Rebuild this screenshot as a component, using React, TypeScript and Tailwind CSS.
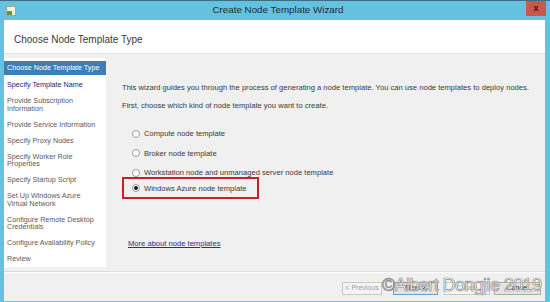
import React from "react";

const steps: { label: string; lines?: string[]; active?: boolean; next?: boolean }[] = [
  { label: "Choose Node Template Type", active: true },
  { label: "Specify Template Name", next: true },
  { label: "Provide Subscription Information", lines: ["Provide Subscription", "Information"] },
  { label: "Provide Service Information" },
  { label: "Specify Proxy Nodes" },
  { label: "Specify Worker Role Properties", lines: ["Specify Worker Role", "Properties"] },
  { label: "Specify Startup Script" },
  { label: "Set Up Windows Azure Virtual Network", lines: ["Set Up Windows Azure", "Virtual Network"] },
  { label: "Configure Remote Desktop Credentials", lines: ["Configure Remote Desktop", "Credentials"] },
  { label: "Configure Availability Policy" },
  { label: "Review" },
];

function Radio({ checked }: { checked?: boolean }) {
  return (
    <span className="w-[8px] h-[8px] rounded-full border border-[#9a9a9a] bg-white flex items-center justify-center shrink-0">
      {checked && <span className="w-[4px] h-[4px] rounded-full bg-[#1a1a1a]" />}
    </span>
  );
}

export default function App() {
  return (
    <div className="w-[550px] h-[302px] bg-[#62c2df] flex flex-col overflow-hidden relative font-['Liberation_Sans',sans-serif]">
      {/* title bar */}
      <div className="h-[20px] border-t border-[#3d6f80] flex items-center relative shrink-0">
        <div className="ml-[6px] w-[10px] h-[10px] bg-[#eef2e4] border border-[#9aa79a] flex items-end justify-start">
          <span className="w-[5px] h-[4px] bg-[#5a9a3a]" />
        </div>
        <div className="absolute left-0 right-0 text-center text-[9.8px] text-[#1d2c35] leading-none top-[4px] pl-[6px]">
          Create Node Template Wizard
        </div>
        <div className="absolute right-[4px] top-[0px] w-[20px] h-[15px] bg-[#c9574f] flex items-center justify-center text-[9px] font-bold text-[#4a0a0a] leading-none">
          x
        </div>
      </div>
      {/* body */}
      <div className="flex-1 ml-[4px] mr-[5px] mb-[5px] bg-[#f0f0f0] flex flex-col">
        <div className="h-[33px] bg-white flex items-center pl-[10px] pt-[6px] text-[10px] text-[#3a3a3a] shrink-0">
          Choose Node Template Type
        </div>
        <div className="h-[1px] bg-[#e2e2e2]" />
        <div className="flex flex-1 pt-[4px] min-h-0">
          <div className="w-[102px] bg-white mb-[4px] text-[7.2px] leading-[7.5px] text-[#5a5a5a] flex flex-col pt-[3px]">
            {steps.map((s) => (
              <div
                key={s.label}
                className={
                  s.active
                    ? "h-[16px] shrink-0"
                    : s.next
                    ? "text-[#22227a] px-[3px] py-[4.25px] shrink-0"
                    : "px-[3px] py-[4.25px] shrink-0"
                }
              >
                {s.active ? (
                  <div className="bg-[#3d7fb5] text-white h-[14px] px-[3px] flex items-center">{s.label}</div>
                ) : (
                  (s.lines ?? [s.label]).map((l) => <div key={l}>{l}</div>)
                )}
              </div>
            ))}
          </div>
          <div className="flex-1 flex flex-col pl-[16px] text-[7.6px] leading-[9px] text-[#3a3a3a]">
            <div className="mt-[25px]">
              This wizard guides you through the process of generating a node template. You can use node templates to deploy nodes.
            </div>
            <div className="mt-[9px]">First, choose which kind of node template you want to create.</div>
            <div className="mt-[19px] flex flex-col gap-[10.5px] pl-[10px]">
              <div className="flex items-center gap-[4px]"><Radio />Compute node template</div>
              <div className="flex items-center gap-[4px]"><Radio />Broker node template</div>
              <div className="flex items-center gap-[4px]"><Radio />Workstation node and unmanaged server node template</div>
            </div>
            <div className="mt-[0px] w-[137px] h-[22px] border-2 border-[#c8202a] flex items-center gap-[4px] pl-[8px]">
              <Radio checked />Windows Azure node template
            </div>
            <div className="mt-[40px] ml-[6px] text-[#2a2a9a] underline">More about node templates</div>
          </div>
        </div>
        <div className="h-[2px] border-t border-[#dcdcdc] bg-white shrink-0" />
        <div className="h-[28px] flex items-center pt-[3px] text-[7px] shrink-0">
          <div className="ml-[338px] w-[40px] h-[13px] border border-[#c8c8c8] bg-[#f4f4f4] text-[#a0a0a0] flex items-center justify-center">&lt; Previous</div>
          <div className="ml-[11px] w-[45px] h-[13px] border border-[#6f9bc8] bg-[#e3e3e3] text-[#222] flex items-center justify-center">Next &gt;</div>
          <div className="ml-[6px] w-[46px] h-[13px] border border-[#c8c8c8] bg-[#f4f4f4] text-[#a0a0a0] flex items-center justify-center">Create</div>
          <div className="ml-[4px] w-[47px] h-[13px] border border-[#acacac] bg-[#e3e3e3] text-[#222] flex items-center justify-center">Cancel</div>
        </div>
      </div>
      <div className="absolute left-[382px] top-[276px] whitespace-nowrap text-[18px] leading-none text-white tracking-[-0.6px] [-webkit-text-stroke:0.7px_#8c8c8c]">
        ©Albert Dongjie 2019
      </div>
    </div>
  );
}
